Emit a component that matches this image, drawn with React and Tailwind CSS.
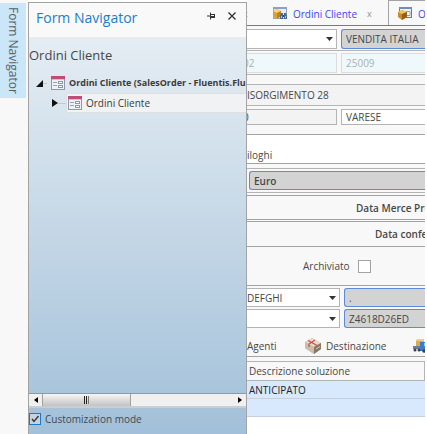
import React from "react";

function FormIcon() {
  return (
    <svg width="14" height="14" viewBox="0 0 14 14" className="shrink-0" aria-hidden="true">
      <rect x="0.5" y="0.5" width="13" height="13" fill="#eef1f6" stroke="#9296a8" />
      <rect x="0" y="0" width="14" height="3" fill="#bd4f76" />
      <rect x="1" y="3" width="12" height="1" fill="#e3b9c8" />
      <path d="M2 6.500h4M2 9.500h4" stroke="#98a2b6" />
      <path d="M7 5h5v3H7zM7 9h5v3H7z" fill="#8d98b0" />
      <path d="M8 6h3v1H8zM8 10h3v1H8z" fill="#fff" />
    </svg>
  );
}

function OrderListIcon() {
  return (
    <svg width="14" height="13" viewBox="0 0 14 13" className="shrink-0" aria-hidden="true">
      <rect x="0.500" y="0.500" width="13" height="11" fill="#e9eef5" stroke="#8ea3bf" />
      <rect x="0" y="0" width="14" height="2" fill="#88a2c6" />
      <path d="M0 4l4-2 4 2v5l-4 3-4-2z" fill="#dca136" />
      <path d="M0 4l4-2 4 2-4 2z" fill="#f6d677" />
      <path d="M4 6l4-2v5l-4 3z" fill="#c17f1e" />
      <path d="M8 6h2v6H7V9zM11 6h2l1 3v3h-3z" fill="#4b6796" />
      <path d="M10 8h1v2h-1z" fill="#2f456b" />
      <path d="M8 9h1v2H8zM12 9h1v2h-1z" fill="#a9c0e2" />
    </svg>
  );
}

function OrderFormIcon() {
  return (
    <svg width="14" height="13" viewBox="0 0 14 13" className="shrink-0" aria-hidden="true">
      <rect x="1.500" y="0.500" width="12" height="10" fill="#eef3f8" stroke="#647d9e" />
      <rect x="1" y="0" width="13" height="2" fill="#6f8db5" />
      <path d="M8 4.500h4v4H8z" fill="#fff" stroke="#8ba0bb" />
      <path d="M0 5l4-2 5 2v5l-5 3-4-3z" fill="#c98c26" />
      <path d="M0 5l4-2 5 2-5 2z" fill="#edc565" />
      <path d="M4 7l5-2v5l-5 3z" fill="#93601a" />
    </svg>
  );
}

function BoxIcon() {
  return (
    <svg width="17" height="16" viewBox="0 0 17 16" className="shrink-0" aria-hidden="true">
      <path d="M0 4l7-4 9 5v6l-7 5-9-6z" fill="#b7a793" />
      <path d="M0 4l7-4 9 5-7 4z" fill="#e5dccd" />
      <path d="M9 9l7-4v6l-7 5z" fill="#877865" />
      <path d="M0 4l9 5v7l-9-6z" fill="#cdbda8" />
      <path d="M3 2.500l9 5M10 2L4 6v3" fill="none" stroke="#c5514b" strokeWidth="1.300" />
      <path d="M11 11l4-2.500" stroke="#d9cebd" />
    </svg>
  );
}

function TruckIcon() {
  return (
    <svg width="17" height="14" viewBox="0 0 17 14" className="shrink-0" aria-hidden="true">
      <path d="M3 1l3-1h5v10H3z" fill="#e5a74c" />
      <path d="M3 1l3-1h5v2H3z" fill="#f5cc86" />
      <path d="M7 3h10v9H7z" fill="#3d7bd2" />
      <path d="M11 4h5v3h-5z" fill="#a9cdf5" />
      <path d="M0 7h7v3H0z" fill="#6f7f9a" />
      <circle cx="2" cy="11" r="1.500" fill="#38414f" />
      <circle cx="6" cy="11" r="1.500" fill="#38414f" />
      <circle cx="11" cy="12" r="1.800" fill="#38414f" />
    </svg>
  );
}

function Field({ label, value, className }) {
  return (
    <input
      aria-label={label}
      defaultValue={value}
      className={"h-full min-w-0 border outline-none " + className}
    />
  );
}

function Combo({ label, value, className }) {
  return (
    <div className={"relative h-full shrink-0 " + className}>
      <select
        aria-label={label}
        className="block h-full w-full appearance-none border border-l-0 border-[#b4b4b4] bg-white outline-none"
      >
        <option>{value}</option>
      </select>
      <svg width="7" height="4" className="pointer-events-none absolute top-2 right-1" aria-hidden="true">
        <path d="M0 0h7L3.500 4z" fill="#333" />
      </svg>
    </div>
  );
}

function Navigator() {
  return (
    <aside className="mt-[2px] flex w-[219px] shrink-0 flex-col border border-b-0 border-[#a3a3a3] bg-linear-to-b from-[#ebf1f5] to-[#a2c0d9]">
      <header className="flex h-[34px] items-center bg-[#f9f9f9] pr-2 pl-[7px]">
        <h1 className="flex-1 pb-1 text-[14px] text-[#1a7fcb]">Form Navigator</h1>
        <button aria-label="Pin" className="mr-3 pb-2">
          <svg width="9" height="8" viewBox="0 0 9 8">
            <path d="M0 4h3" stroke="#333" />
            <path d="M3 0.500h1v7H3zM4 2h4v4H4z" fill="#333" />
            <path d="M4 3h3v1H4z" fill="#f9f9f9" />
          </svg>
        </button>
        <button aria-label="Close" className="mr-[2px] pb-2">
          <svg width="8" height="8" viewBox="0 0 8 8">
            <path d="M0.500 0.500l7 7M7.500 0.500l-7 7" stroke="#333" strokeWidth="1.300" />
          </svg>
        </button>
      </header>
      <h2 className="mt-[6px] h-6 text-[13px] leading-6 text-[#474747]">Ordini Cliente</h2>
      <ul className="mt-[2px] min-h-0 flex-1 overflow-hidden text-[9px] whitespace-nowrap">
        <li>
          <div className="mt-1 flex h-5 items-center pl-[7px] font-bold text-[#3b3b3b]">
            <svg width="7" height="7" className="shrink-0" aria-hidden="true"><path d="M7 0v7H0z" fill="#111" /></svg>
            <span className="mr-1 w-1 shrink-0 border-t border-[#c4cbd0]" />
            <FormIcon />
            <span className="ml-1">Ordini Cliente (SalesOrder - Fluentis.Flu</span>
          </div>
          <ul>
            <li className="flex h-5 items-center pl-[23px] text-[10px] text-[#3b3b3b]">
              <svg width="6" height="8" className="shrink-0" aria-hidden="true"><path d="M0 0l6 4-6 4z" fill="#111" /></svg>
              <span className="w-2 border-t border-[#c4cbd0]" />
              <span className="flex h-5 flex-1 items-center border border-r-0 border-[#dedfe1] bg-[#f1f2f4] pl-px">
                <FormIcon />
                <span className="ml-1">Ordini Cliente</span>
              </span>
            </li>
          </ul>
        </li>
      </ul>
      <div className="flex h-[15px] shrink-0 items-stretch border-t border-b-2 border-t-[#979797] border-b-[#c9ced2] bg-[#f0f0f0]">
        <button aria-label="Scroll left" className="flex w-[14px] items-center justify-center border-r border-[#a0a0a0]">
          <svg width="4" height="6"><path d="M4 0v6L0 3z" fill="#000" /></svg>
        </button>
        <div className="flex w-[88px] items-center justify-center gap-px border-r border-[#a0a0a0] bg-linear-to-b from-[#f6f6f6] to-[#c3c3c3]">
          <span className="h-2 w-px bg-[#222]" />
          <span className="h-2 w-px bg-[#222]" />
          <span className="h-2 w-px bg-[#777]" />
        </div>
        <button aria-label="Scroll right" className="ml-auto flex w-3 items-center justify-center">
          <svg width="4" height="6"><path d="M0 0v6L4 3z" fill="#000" /></svg>
        </button>
      </div>
      <label className="flex h-[26px] shrink-0 items-center pb-[5px] text-[10px] text-[#3f4a52]">
        <input type="checkbox" defaultChecked className="peer sr-only" />
        <svg width="12" height="12" viewBox="0 0 12 12" className="mr-1" aria-hidden="true">
          <rect x="0.500" y="0.500" width="11" height="11" fill="#c3d3df" stroke="#1879c8" />
          <path d="M3 6l2 2.500L9.500 3" fill="none" stroke="#333" strokeWidth="1.400" />
        </svg>
        Customization mode
      </label>
    </aside>
  );
}

export default function App() {
  return (
    <div className="flex h-screen overflow-hidden bg-white pr-[2px] font-['Open_Sans','Noto_Sans',sans-serif] text-[10px] leading-4 text-[#474747]">
      <div className="w-7 shrink-0 bg-[#f8f8f8]">
        <button className="mt-[3px] flex h-[95px] w-[26px] items-center justify-center bg-[#cbe6f8] text-[12px] whitespace-nowrap text-[#5a5f63] [writing-mode:vertical-rl]">
          Form Navigator
        </button>
      </div>
      <Navigator />
      <main className="flex min-w-0 flex-1 flex-col overflow-hidden bg-[#f8f8f8] whitespace-nowrap">
        <nav className="flex h-[26px] shrink-0 items-stretch border-b border-[#ef4a40]">
          <button aria-label="Close tab" className="-ml-1 w-[30px] shrink-0 pt-[2px] text-left text-[9px] text-[#8a9097]">x</button>
          <div className="flex w-[115px] shrink-0 items-center gap-[6px] pt-[2px] text-[#4343f5]">
            <OrderListIcon />
            <button>Ordini Cliente</button>
            <button aria-label="Close tab" className="ml-1 text-[9px] text-[#8a9097]">x</button>
          </div>
          <div className="flex shrink-0 items-center gap-[6px] border-t border-l border-[#a3a3a3] bg-[#f8f8f8] pt-px pl-[9px] text-[#4343f5]">
            <OrderFormIcon />
            <button>O</button>
          </div>
        </nav>

        <div className="flex h-[25px] shrink-0 gap-1 border-b border-[#b4b4b4] pt-[3px] pb-px">
          <Combo label="Tipo" value="" className="w-[90px]" />
          <Field label="Descrizione tipo" value="VENDITA ITALIA" className="flex-1 rounded-l-[3px] border-r-0 border-[#5b8bd8] bg-[#d3d3d3] pl-1" />
        </div>
        <div className="flex h-[24px] shrink-0 gap-1 border-b border-[#b4b4b4] pt-[2px] pb-px text-[#a9b1b3]">
          <Field label="Codice" value="02" className="w-[90px] border-l-0 border-[#d8dcdc] bg-[#eff9fb] -indent-1" />
          <Field label="Numero" value="25009" className="flex-1 border-r-0 border-[#d8dcdc] bg-[#eff9fb] pl-1" />
        </div>
        <div className="flex h-[60px] shrink-0 flex-col gap-[3px] border-b border-[#a3a3a3] pt-[9px] pb-[9px]">
          <Field label="Indirizzo" value="ISORGIMENTO 28" className="h-[18px] border-x-0 border-[#b4b4b4] bg-[#f3f3f3]" />
          <div className="flex h-5 gap-1">
            <Field label="CAP" value="0" className="w-[90px] border-l-0 border-[#b4b4b4] bg-[#f3f3f3] -indent-1" />
            <Field label="Città" value="VARESE" className="flex-1 border-r-0 border-[#b4b4b4] bg-white pl-1" />
          </div>
        </div>

        <div className="flex h-[29px] shrink-0 items-end border-b border-[#a3a3a3] bg-white">
          <button>iloghi</button>
        </div>
        <div className="mt-1 flex h-[25px] shrink-0 border-y border-[#b4b4b4] py-[2px] pl-[2px]">
          <Field label="Valuta" value="Euro" className="flex-1 rounded-l-[3px] border-r-0 border-[#5b8bd8] bg-[#d3d3d3] pl-1 font-semibold" />
        </div>
        <div className="mt-[2px] flex h-[25px] shrink-0 items-center border-y border-[#a3a3a3] pl-[109px] font-semibold">
          Data Merce Pro
        </div>
        <div className="mt-px flex h-[26px] shrink-0 items-center border-y border-[#a3a3a3] pl-32 font-semibold">
          Data confe
        </div>
        <label className="flex h-[39px] shrink-0 items-center gap-2 border-b border-[#a3a3a3] pl-14">
          Archiviato
          <input type="checkbox" className="size-[13px] appearance-none border border-[#a3a3a3] bg-white" />
        </label>

        <div className="grid shrink-0 grid-cols-[93px_1fr] grid-rows-[19px_19px] gap-x-1 gap-y-[2px] pt-[2px]">
          <Combo label="Causale" value="DEFGHI" className="-indent-1" />
          <Field label="Descrizione causale" value="." className="rounded-l-[3px] border-r-0 border-[#5b8bd8] bg-[#d3d3d3] pl-1" />
          <Combo label="Codice gara" value="" className="" />
          <Field label="CIG" value="Z4618D26ED" className="rounded-l-[3px] border-r-0 border-[#5b8bd8] bg-[#d3d3d3] pl-1" />
        </div>
        <div className="flex h-[29px] shrink-0 items-center border-b border-[#a3a3a3] pt-2">
          <button className="w-[58px] shrink-0 text-left">Agenti</button>
          <button className="flex w-[108px] shrink-0 items-center gap-1"><BoxIcon />Destinazione</button>
          <TruckIcon />
        </div>
        <div className="flex-1 pt-1">
          <div className="h-full bg-white">
            <table className="w-full border-collapse text-left">
              <thead>
                <tr className="h-[19px] border border-l-0 border-[#b4b4b4] bg-[#f8f8f8]">
                  <th className="p-0 pl-[2px] font-normal">Descrizione soluzione</th>
                </tr>
              </thead>
              <tbody className="bg-[#d9e9fd] text-[#222]">
                <tr className="h-[18px] border-b border-[#c5d0dc]"><td className="p-0 pl-[2px]">ANTICIPATO</td></tr>
                <tr className="h-[18px] border-b border-[#c5d0dc]"><td className="p-0" /></tr>
              </tbody>
            </table>
          </div>
        </div>
      </main>
    </div>
  );
}
